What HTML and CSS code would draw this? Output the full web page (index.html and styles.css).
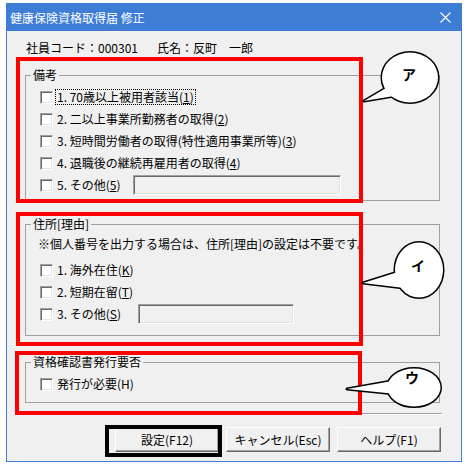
FILE: index.html
```html
<!DOCTYPE html>
<html lang="ja">
<head>
  <meta charset="UTF-8">
  <link rel="stylesheet" href="styles.css">
</head>
<body>
  <div class="window">
    <div class="titlebar">
      <span class="title">健康保険資格取得届 修正</span>
      <svg class="close" width="11" height="11" viewBox="0 0 11 11">
        <path d="M0.5 0.5 L10.5 10.5 M10.5 0.5 L0.5 10.5" stroke="#fff" stroke-width="1.1" fill="none"/>
      </svg>
    </div>

    <div class="content">
      <div class="emp">
        <span>社員コード：000301</span>
        <span class="emp-name">氏名：反町　一郎</span>
      </div>

      <fieldset class="group group-biko">
        <legend>備考</legend>
        <div class="row">
          <span class="cb"></span>
          <span class="label focus">1. 70歳以上被用者該当(<u>1</u>)</span>
        </div>
        <div class="row">
          <span class="cb"></span>
          <span class="label">2. 二以上事業所勤務者の取得(<u>2</u>)</span>
        </div>
        <div class="row">
          <span class="cb"></span>
          <span class="label">3. 短時間労働者の取得(特性適用事業所等)(<u>3</u>)</span>
        </div>
        <div class="row">
          <span class="cb"></span>
          <span class="label">4. 退職後の継続再雇用者の取得(<u>4</u>)</span>
        </div>
        <div class="row">
          <span class="cb"></span>
          <span class="label label-fixed w76">5. その他(<u>5</u>)</span>
          <span class="field field-biko"></span>
        </div>
      </fieldset>

      <fieldset class="group group-addr">
        <legend>住所[理由]</legend>
        <div class="note">※個人番号を出力する場合は、住所[理由]の設定は不要です。</div>
        <div class="row">
          <span class="cb"></span>
          <span class="label">1. 海外在住(<u>K</u>)</span>
        </div>
        <div class="row">
          <span class="cb"></span>
          <span class="label">2. 短期在留(<u>T</u>)</span>
        </div>
        <div class="row">
          <span class="cb"></span>
          <span class="label label-fixed w80">3. その他(<u>S</u>)</span>
          <span class="field field-addr"></span>
        </div>
      </fieldset>

      <fieldset class="group group-cert">
        <legend>資格確認書発行要否</legend>
        <div class="row">
          <span class="cb"></span>
          <span class="label">発行が必要(H)</span>
        </div>
      </fieldset>

      <div class="sep"></div>

      <div class="buttons">
        <div class="btn">設定(F12)</div>
        <div class="btn">キャンセル(Esc)</div>
        <div class="btn">ヘルプ(F1)</div>
      </div>
    </div>
  </div>

  <!-- 注記（赤枠・吹き出し） -->
  <div class="mark mark-1"></div>
  <div class="mark mark-2"></div>
  <div class="mark mark-3"></div>
  <div class="mark-btn"></div>

  <svg class="callouts" width="467" height="466" viewBox="0 0 467 466">
    <g stroke="#000" stroke-width="3" fill="#fff" stroke-linejoin="round">
      <polygon points="364,101 386,88 394,96"/>
      <ellipse cx="410" cy="77.5" rx="28" ry="25"/>
      <polygon points="363,283 398,272 404,288"/>
      <ellipse cx="419" cy="270" rx="24" ry="27.5"/>
      <polygon points="347,389 392,381 396,394"/>
      <ellipse cx="414" cy="387.5" rx="26.5" ry="19"/>
    </g>
    <g fill="#fff">
      <polygon points="364,101 386,88 394,96"/>
      <ellipse cx="410" cy="77.5" rx="28" ry="25"/>
      <polygon points="363,283 398,272 404,288"/>
      <ellipse cx="419" cy="270" rx="24" ry="27.5"/>
      <polygon points="347,389 392,381 396,394"/>
      <ellipse cx="414" cy="387.5" rx="26.5" ry="19"/>
    </g>
    <g class="callout-text">
      <text x="409" y="80">ア</text>
      <text x="418" y="271">イ</text>
      <text x="412" y="383">ウ</text>
    </g>
  </svg>
</body>
</html>
```

FILE: styles.css
```css
body {
  margin: 0;
  background-color: #fff;
  font-family: "Noto Sans CJK JP", "Noto Sans", sans-serif;
  font-size: 12px;
  color: #000;
  position: relative;
}

.window {
  margin: 3px 5px 0 6px;
  width: 456px;
  height: 459px;
  box-sizing: border-box;
  border: 1px solid #3d7dd6;
  background-color: #f0f0f0;
}

.titlebar {
  height: 27px;
  background-color: #3d7dd6;
  color: #fff;
  display: flex;
  align-items: center;
  justify-content: space-between;
  padding: 0 10px 0 3px;
}

.title {
  font-size: 12px;
  line-height: 14px;
}

.close {
  display: block;
}

.content {
  padding: 10px 21px 0 18px;
}

.emp {
  line-height: 14px;
  margin-left: 1px;
  display: flex;
}

.emp-name {
  margin-left: 19px;
}

.group {
  margin: 13px 0 0 0;
  padding: 4px 0 4px 0;
  border: 1px solid #a0a0a0;
  min-width: 0;
}

.group legend {
  padding: 0 2px;
  margin-left: 5px;
  line-height: 14px;
}

.group-addr {
  margin-top: 16px;
  padding: 2px 0 10px 0;
}

.group-cert {
  margin-top: 19px;
  padding: 4px 0 7px 0;
}

.row {
  display: flex;
  align-items: center;
  height: 22px;
  padding-left: 14px;
}

.cb {
  flex: none;
  width: 13px;
  height: 13px;
  box-sizing: border-box;
  background-color: #fff;
  border: 1px solid;
  border-color: #a0a0a0 #fff #fff #a0a0a0;
  box-shadow: inset 1px 1px #696969, inset -1px -1px #e3e3e3;
  margin-right: 4px;
}

.label {
  line-height: 14px;
  white-space: nowrap;
}

.label u {
  text-underline-offset: 1px;
}

.label-fixed {
  flex: none;
}

.w76 {
  width: 76px;
}

.w80 {
  width: 81px;
}

.focus {
  outline: 1px dotted #000;
  outline-offset: 0;
  padding: 0 1px;
  margin-left: -1px;
}

.field {
  flex: none;
  height: 20px;
  box-sizing: border-box;
  background-color: #f0f0f0;
  border: 1px solid;
  border-color: #a0a0a0 #fff #fff #a0a0a0;
  box-shadow: inset 1px 1px #696969, inset -1px -1px #e3e3e3;
}

.field-biko {
  width: 208px;
}

.field-addr {
  width: 156px;
}

.note {
  height: 22px;
  line-height: 22px;
  padding-left: 12px;
  margin-bottom: 4px;
  white-space: nowrap;
}

.sep {
  margin: 10px -2px 0 -9px;
  height: 0;
  border-top: 1px solid #a0a0a0;
  border-bottom: 1px solid #fff;
}

.buttons {
  display: flex;
  justify-content: flex-end;
  gap: 7px;
  margin-top: 12px;
  margin-right: -1px;
}

.btn {
  width: 104px;
  height: 25px;
  box-sizing: border-box;
  background-color: #f0f0f0;
  border: 1px solid;
  border-color: #fff #696969 #696969 #fff;
  box-shadow: inset -1px -1px #a0a0a0;
  display: flex;
  align-items: center;
  justify-content: center;
  line-height: 14px;
}

/* 注記 */
.mark {
  position: absolute;
  left: 16px;
  width: 347px;
  box-sizing: border-box;
  border: 4px solid #f00;
}

.mark-1 {
  top: 57px;
  height: 146px;
}

.mark-2 {
  top: 212px;
  height: 134px;
}

.mark-3 {
  left: 15px;
  top: 351px;
  height: 64px;
}

.mark-btn {
  position: absolute;
  left: 105px;
  top: 425px;
  width: 117px;
  height: 32px;
  box-sizing: border-box;
  border: 4px solid #000;
}

.callouts {
  position: absolute;
  left: 0;
  top: 0;
  pointer-events: none;
}

.callout-text text {
  font-family: "Noto Sans CJK JP", sans-serif;
  font-size: 14px;
  font-weight: bold;
  text-anchor: middle;
  fill: #000;
}
```
